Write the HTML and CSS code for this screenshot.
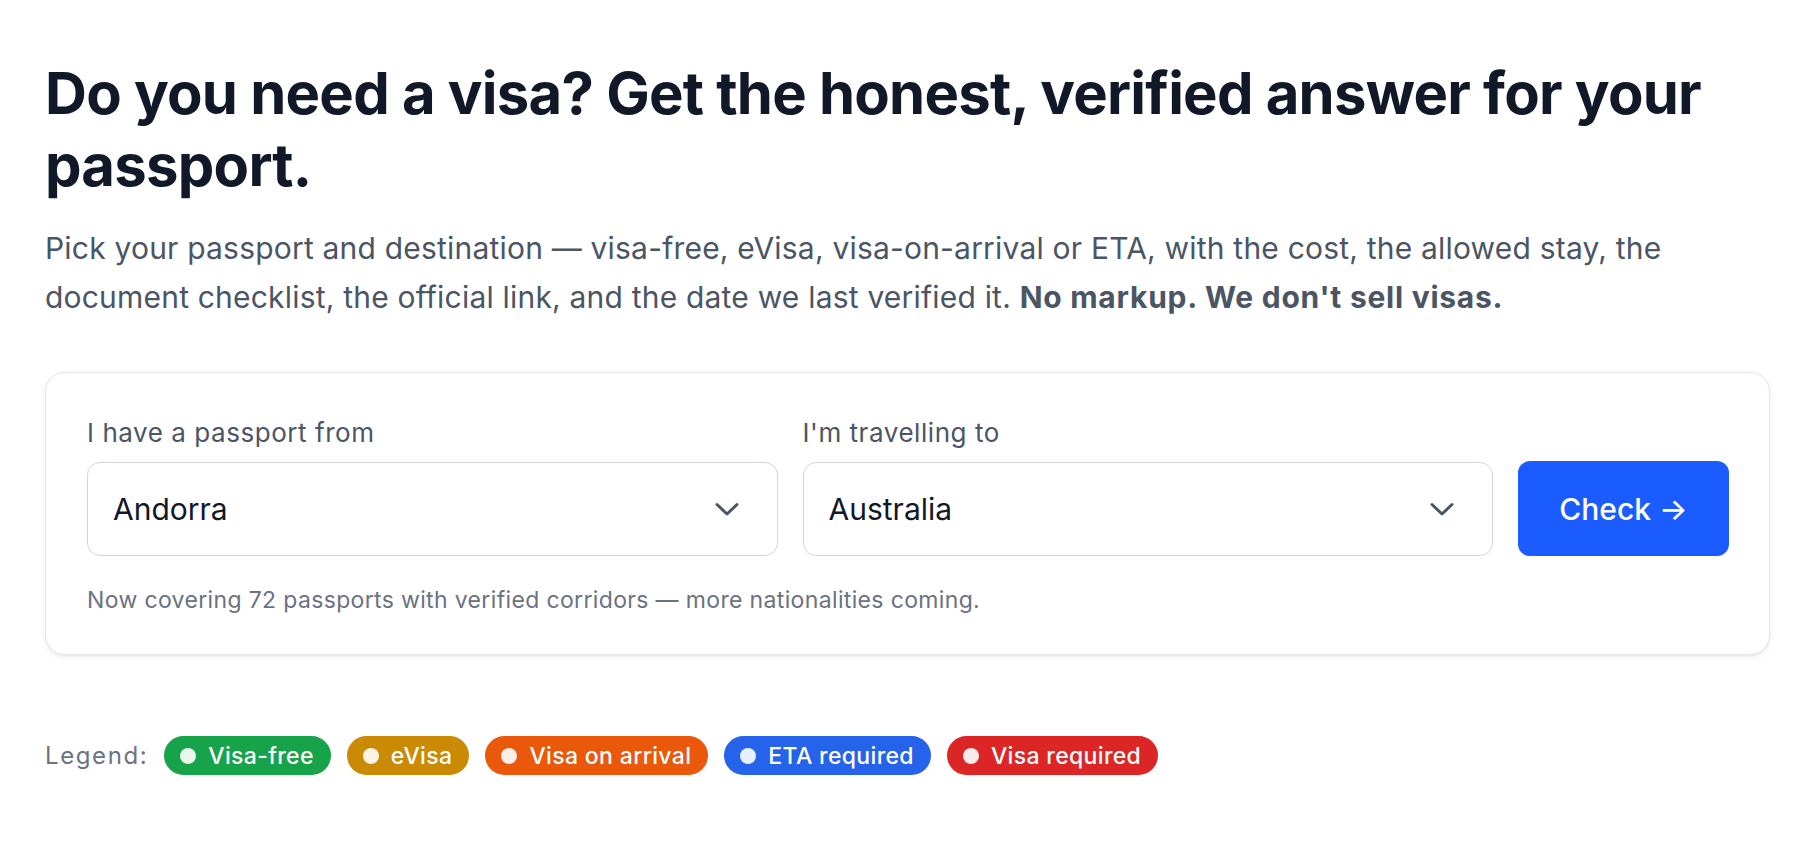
FILE: index.html
```html
<!DOCTYPE html>
<html lang="en">
<head>
<meta charset="utf-8">
<title>Do you need a visa?</title>
<link rel="stylesheet" href="styles.css">
</head>
<body>
<main class="page">
  <h1 class="title">Do you need a visa? Get the honest, verified answer for your passport.</h1>
  <p class="intro">Pick your passport and destination — visa-free, eVisa, visa-on-arrival or ETA, with the cost, the allowed stay, the document checklist, the official link, and the date we last verified it. <strong>No markup. We don't sell visas.</strong></p>

  <section class="card">
    <div class="form-row">
      <div class="field">
        <label class="label">I have a passport from</label>
        <div class="select">
          <span class="select-value">Andorra</span>
          <svg class="chev" width="24" height="15" viewBox="0 0 24 15"><path d="M2 2.5 L12 12 L22 2.5" fill="none" stroke="#4b5563" stroke-width="3" stroke-linecap="round" stroke-linejoin="round"/></svg>
        </div>
      </div>
      <div class="field">
        <label class="label">I'm travelling to</label>
        <div class="select">
          <span class="select-value">Australia</span>
          <svg class="chev" width="24" height="15" viewBox="0 0 24 15"><path d="M2 2.5 L12 12 L22 2.5" fill="none" stroke="#4b5563" stroke-width="3" stroke-linecap="round" stroke-linejoin="round"/></svg>
        </div>
      </div>
      <button class="check">Check →</button>
    </div>
    <p class="note">Now covering 72 passports with verified corridors — more nationalities coming.</p>
  </section>

  <div class="legend">
    <span class="legend-label">Legend:</span>
    <span class="pill pill-free"><span class="dot"></span>Visa-free</span>
    <span class="pill pill-evisa"><span class="dot"></span>eVisa</span>
    <span class="pill pill-voa"><span class="dot"></span>Visa on arrival</span>
    <span class="pill pill-eta"><span class="dot"></span>ETA required</span>
    <span class="pill pill-req"><span class="dot"></span>Visa required</span>
  </div>
</main>
</body>
</html>
```

FILE: styles.css
```css
* { box-sizing: border-box; }
html, body { margin: 0; padding: 0; background: #ffffff; }
body {
  font-family: Inter, "Noto Sans", "Liberation Sans", sans-serif;
  color: #111827;
}
.page {
  padding: 57px 42px 0 45px;
}
.title {
  margin: 0;
  font-size: 58px;
  line-height: 72px;
  font-weight: 700;
  letter-spacing: -0.013em;
  color: #111827;
}
.intro {
  margin: 23px 0 0;
  font-size: 30px;
  line-height: 48.5px;
  letter-spacing: 0.2px;
  color: #4b5563;
}
.intro strong {
  font-weight: 700;
  letter-spacing: 0.75px;
}
.card {
  margin-top: 51px;
  border: 1.5px solid #e5e7eb;
  border-radius: 20px;
  background: #fff;
  padding: 41px 40px 37px 41px;
  box-shadow: 0 2px 6px rgba(0,0,0,0.07), 0 1px 2px rgba(0,0,0,0.04);
}
.form-row {
  display: flex;
  align-items: flex-end;
  gap: 25px;
}
.field {
  flex: 1 1 0;
  display: flex;
  flex-direction: column;
  gap: 10px;
}
.label {
  font-size: 26px;
  line-height: 38px;
  letter-spacing: 0.55px;
  color: #4b5563;
}
.select {
  height: 94px;
  border: 1.5px solid #d1d5db;
  border-radius: 13px;
  display: flex;
  align-items: center;
  justify-content: space-between;
  padding: 0 38px 0 25px;
}
.select-value {
  font-size: 30px;
  color: #111827;
}
.chev { display: block; }
.check {
  flex: 0 0 211px;
  height: 95px;
  border: none;
  border-radius: 12px;
  background: #1a5cff;
  color: #fff;
  font-family: inherit;
  font-size: 30px;
  font-weight: 500;
}
.note {
  margin: 27px 0 0;
  font-size: 23px;
  line-height: 34px;
  letter-spacing: 0.35px;
  color: #6b7280;
}
.legend {
  margin-top: 81px;
  display: flex;
  align-items: center;
  gap: 16px;
}
.legend-label {
  font-size: 24px;
  letter-spacing: 1.6px;
  color: #6b7280;
}
.pill {
  display: inline-flex;
  align-items: center;
  height: 39px;
  padding: 0 17px 0 16px;
  border-radius: 20px;
  color: #fff;
  font-size: 23px;
  font-weight: 500;
  letter-spacing: 0.35px;
  gap: 12px;
}
.dot {
  width: 16px;
  height: 16px;
  border-radius: 50%;
  background: rgba(255,255,255,0.9);
}
.pill-free { background: #16a34a; }
.pill-evisa { background: #ca8a04; }
.pill-voa { background: #ea580c; }
.pill-eta { background: #2563eb; }
.pill-req { background: #dc2626; }
```
